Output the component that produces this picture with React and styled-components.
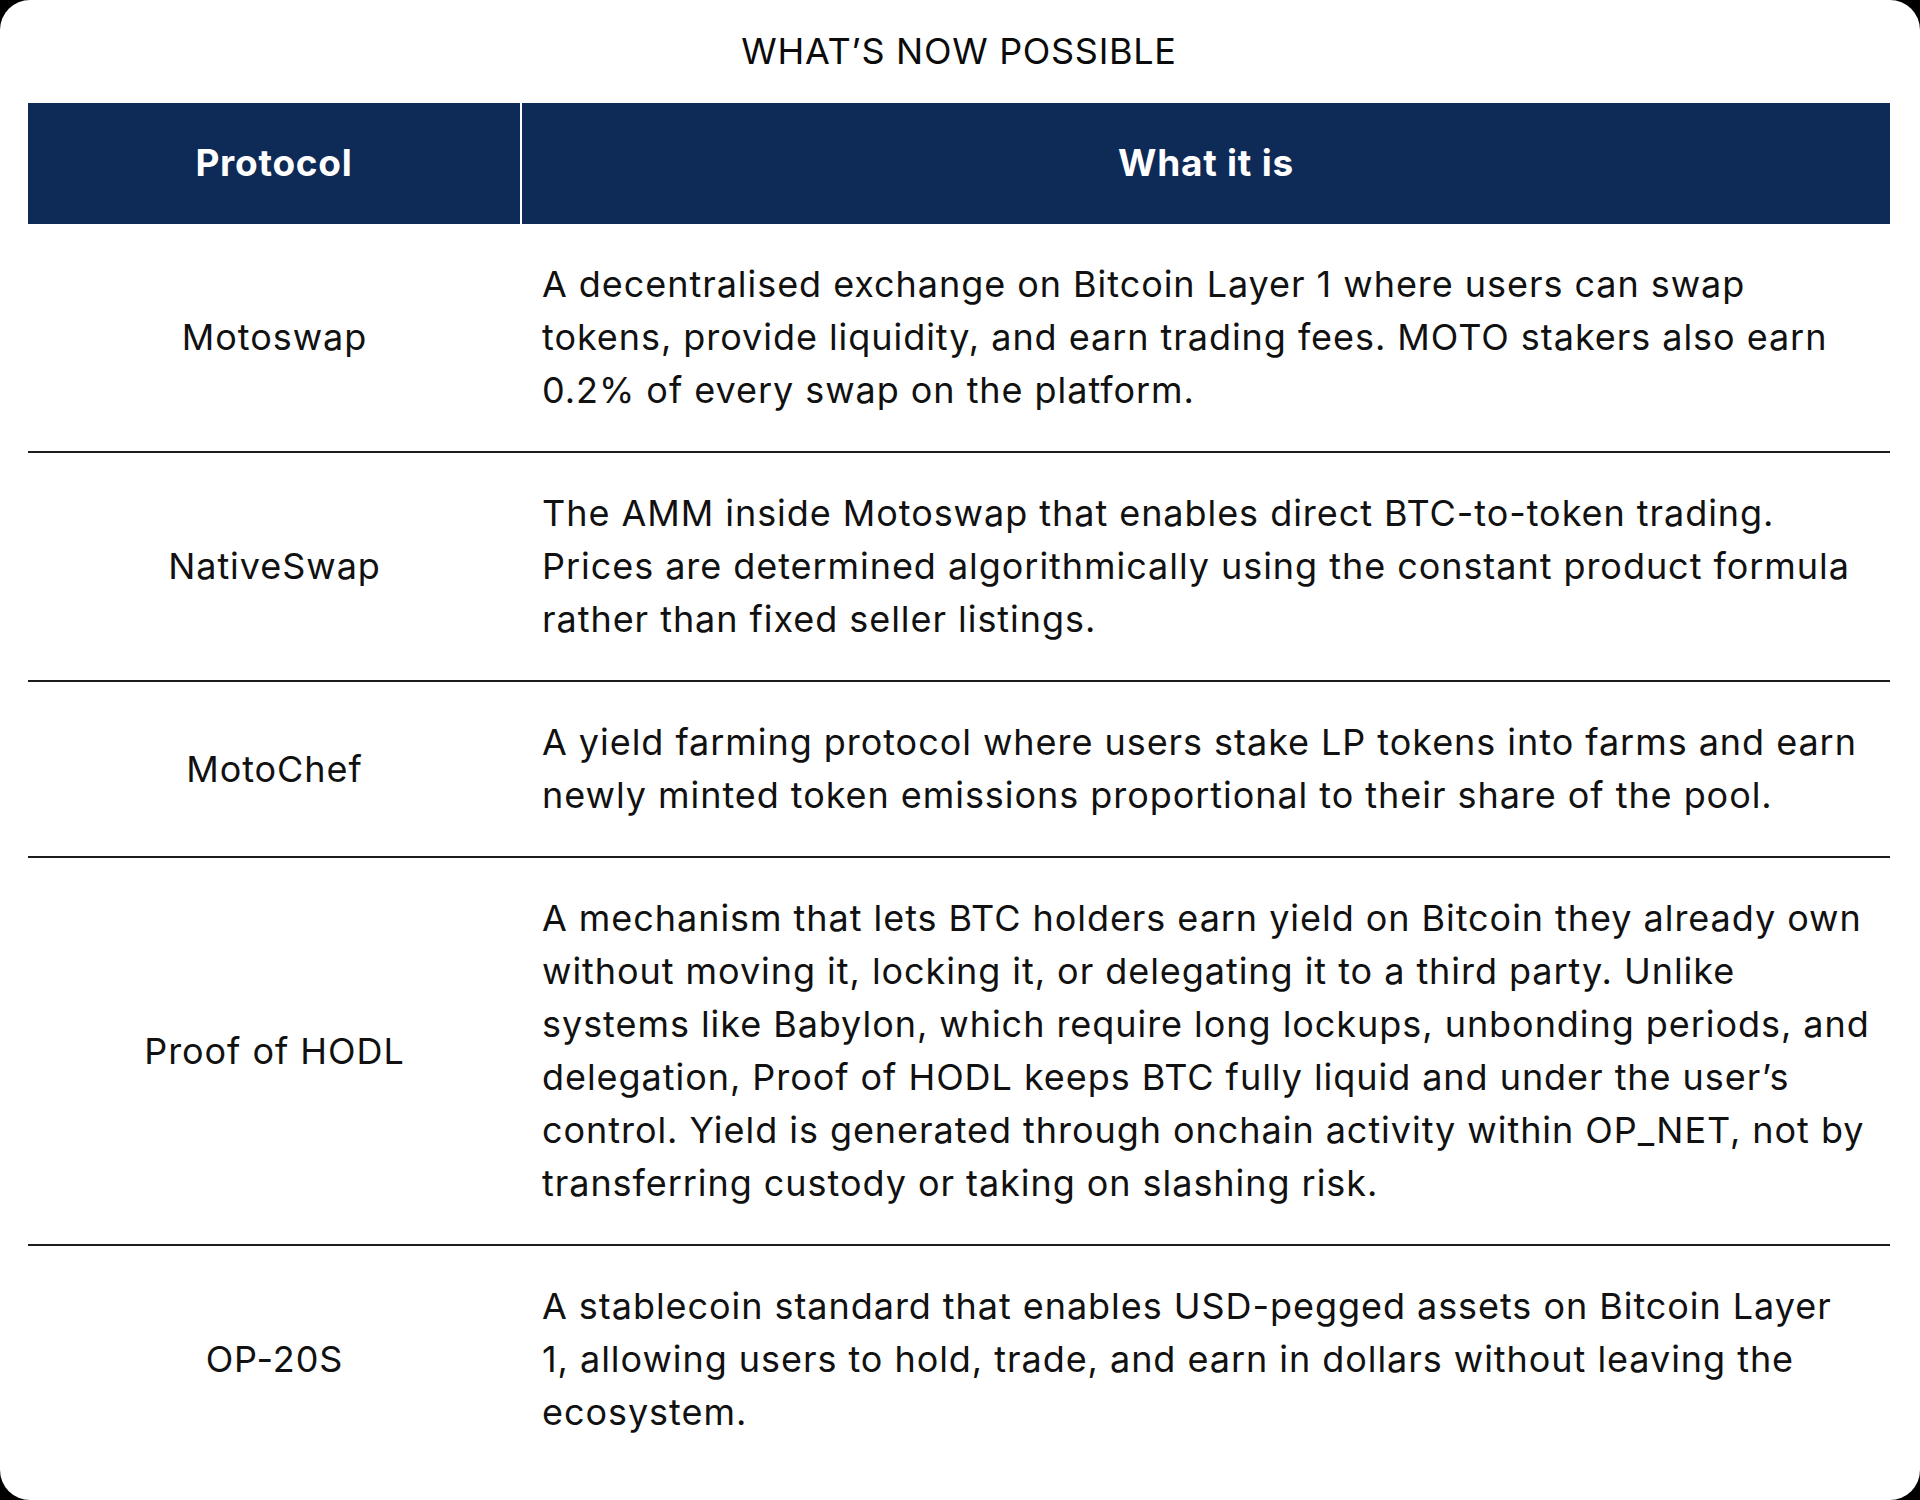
import React from 'react'
import styled, { createGlobalStyle } from 'styled-components'

const GlobalStyle = createGlobalStyle`
  html, body {
    margin: 0;
    padding: 0;
    background: #000;
  }
  body {
    font-family: Inter, "Noto Sans", "Liberation Sans", sans-serif;
  }
`

const rows = [
  {
    name: 'Motoswap',
    text: 'A decentralised exchange on Bitcoin Layer 1 where users can swap tokens, provide liquidity, and earn trading fees. MOTO stakers also earn 0.2% of every swap on the platform.',
  },
  {
    name: 'NativeSwap',
    text: 'The AMM inside Motoswap that enables direct BTC-to-token trading. Prices are determined algorithmically using the constant product formula rather than fixed seller listings.',
  },
  {
    name: 'MotoChef',
    text: 'A yield farming protocol where users stake LP tokens into farms and earn newly minted token emissions proportional to their share of the pool.',
  },
  {
    name: 'Proof of HODL',
    text: 'A mechanism that lets BTC holders earn yield on Bitcoin they already own without moving it, locking it, or delegating it to a third party. Unlike systems like Babylon, which require long lockups, unbonding periods, and delegation, Proof of HODL keeps BTC fully liquid and under the user\u2019s control. Yield is generated through onchain activity within OP_NET, not by transferring custody or taking on slashing risk.',
  },
  {
    name: 'OP-20S',
    text: 'A stablecoin standard that enables USD-pegged assets on Bitcoin Layer 1, allowing users to hold, trade, and earn in dollars without leaving the ecosystem.',
    narrow: true,
  },
]

export default function App() {
  return (
    <>
      <GlobalStyle />
      <Card>
        <Title>WHAT&rsquo;S NOW POSSIBLE</Title>
        <Table>
          <colgroup>
            <col style={{ width: 493 }} />
            <col />
          </colgroup>
          <thead>
            <tr>
              <HeadCell>Protocol</HeadCell>
              <HeadCell>What it is</HeadCell>
            </tr>
          </thead>
          <tbody>
            {rows.map((row) => (
              <Row key={row.name}>
                <NameCell>{row.name}</NameCell>
                <DescCell $narrow={row.narrow}>{row.text}</DescCell>
              </Row>
            ))}
          </tbody>
        </Table>
      </Card>
    </>
  )
}

const Card = styled.div`
  box-sizing: border-box;
  width: 1920px;
  height: 1500px;
  background: #fff;
  border-radius: 30px;
  padding: 24px 30px 0 28px;
  overflow: hidden;
`

const Title = styled.h1`
  margin: 0 0 25px;
  text-align: center;
  font-size: 36px;
  line-height: 54px;
  font-weight: 400;
  color: #0b0b0b;
  letter-spacing: 0.7px;
`

const Table = styled.table`
  width: 100%;
  border-collapse: collapse;
  table-layout: fixed;
`

const HeadCell = styled.th`
  background: #0e2a56;
  color: #fff;
  font-size: 37px;
  line-height: 54px;
  font-weight: 700;
  letter-spacing: 0.75px;
  padding: 33px 20px 34px;
  text-align: center;
  & + & {
    border-left: 2px solid #fff;
  }
`

const Row = styled.tr`
  & + & td {
    border-top: 2px solid #1c1c1c;
  }
`

const NameCell = styled.td`
  font-size: 36px;
  line-height: 53px;
  letter-spacing: 0.95px;
  color: #111;
  text-align: center;
  vertical-align: middle;
  padding: 34px 20px;
`

const DescCell = styled.td`
  font-size: 36px;
  line-height: 53px;
  letter-spacing: 0.95px;
  color: #111;
  text-align: left;
  padding: 34px ${(p) => (p.$narrow ? '26px' : '19px')} 34px 21px;
`
